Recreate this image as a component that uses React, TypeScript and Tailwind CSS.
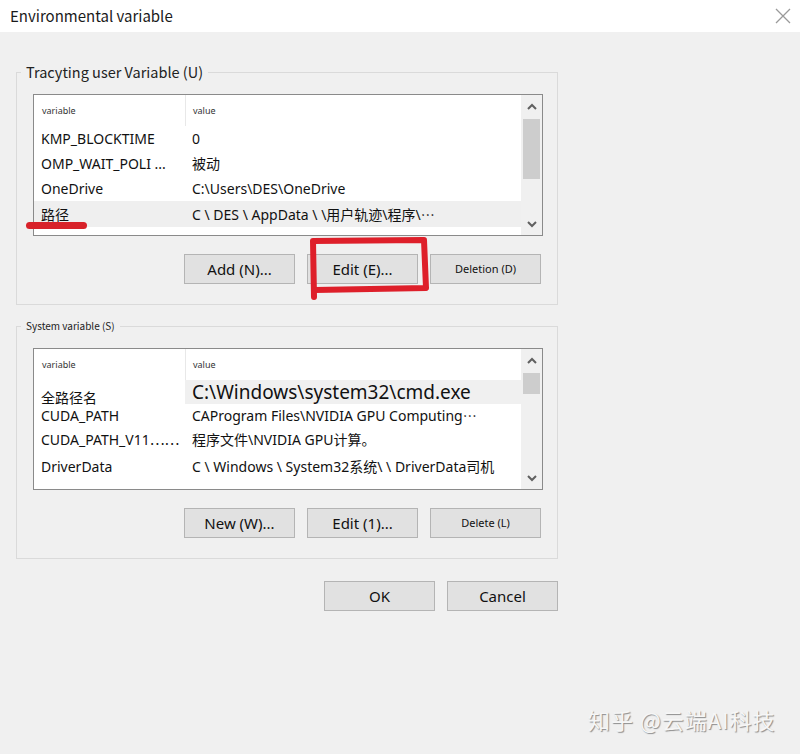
import type { ReactNode } from "react";

const cjk = "font-['Noto_Sans','Noto_Sans_CJK_SC',sans-serif]";
const ui = "font-['Noto_Sans_CJK_SC','Noto_Sans',sans-serif]";
const dots = "font-['Noto_Sans_CJK_SC',sans-serif]";

type Row = { name: ReactNode; value: ReactNode; h: string; sel?: boolean; valueSel?: boolean };

const userRows: Row[] = [
  { name: "KMP_BLOCKTIME", value: "0", h: "h-[25px]" },
  { name: "OMP_WAIT_POLI ...", value: "被动", h: "h-[25px]" },
  { name: "OneDrive", value: "C:\\Users\\DES\\OneDrive", h: "h-[25px]" },
  {
    name: "路径",
    value: (
      <>
        C \ DES \ AppData \ \用户轨迹\程序\<span className={dots}>⋯</span>
      </>
    ),
    h: "h-[26px]",
    sel: true,
  },
];

const sysRows: Row[] = [
  {
    name: <span className="relative top-[5px]">全路径名</span>,
    value: <span className="text-[19px]">C:\Windows\system32\cmd.exe</span>,
    h: "h-[24px]",
    valueSel: true,
  },
  {
    name: "CUDA_PATH",
    value: (
      <>
        CAProgram Files\NVIDIA GPU Computing<span className={dots}>⋯</span>
      </>
    ),
    h: "h-[22px]",
  },
  {
    name: (
      <>
        CUDA_PATH_V11<span className={dots}>⋯⋯</span>
      </>
    ),
    value: "程序文件\\NVIDIA GPU计算。",
    h: "h-[27px]",
  },
  { name: "DriverData", value: "C \\ Windows \\ System32系统\\ \\ DriverData司机", h: "h-[26px]" },
];

function Chevron({ up }: { up?: boolean }) {
  return (
    <svg width="10" height="7" viewBox="0 0 10 7">
      <path
        d={up ? "M1 6 L5 2 L9 6" : "M1 1 L5 5 L9 1"}
        fill="none"
        stroke="#606060"
        strokeWidth="2"
      />
    </svg>
  );
}

function ListBox({ rows, thumb }: { rows: Row[]; thumb: string }) {
  return (
    <div className="flex h-[142px] w-[510px] border border-[#8a8a8a] bg-white">
      <div className="flex flex-1 flex-col">
        <div className="flex h-[31px] items-center text-[9px] text-[#333]">
          <div className="flex h-full w-[151px] items-center pl-[8px]">variable</div>
          <div className="flex h-full items-center border-l border-[#e8e8e8] pl-[7px]">value</div>
        </div>
        {rows.map((r, i) => (
          <div key={i} className={`flex items-center text-[14px] text-[#111] ${r.h} ${r.sel ? "bg-[#efefef]" : ""}`}>
            <div className="w-[151px] shrink-0 whitespace-nowrap pl-[7px]">{r.name}</div>
            <div className={`flex h-full flex-1 items-center whitespace-nowrap pl-[7px] ${r.valueSel ? "bg-[#f0f0f0]" : ""}`}>
              {r.value}
            </div>
          </div>
        ))}
      </div>
      <div className="flex w-[21px] flex-col items-center bg-[#f0f0f0]">
        <div className="flex h-[22px] items-center justify-center">
          <Chevron up />
        </div>
        <div className={`w-[17px] bg-[#cdcdcd] ${thumb}`} />
        <div className="flex-1" />
        <div className="flex h-[22px] items-center justify-center">
          <Chevron />
        </div>
      </div>
    </div>
  );
}

function Btn({ children, small }: { children: ReactNode; small?: boolean }) {
  return (
    <button
      type="button"
      className={`flex h-[30px] w-[111px] items-center justify-center border border-[#b4b4b4] bg-[#e1e1e1] text-[#111] ${
        small ? "text-[11px]" : "text-[15px]"
      }`}
    >
      {children}
    </button>
  );
}

function Group({
  legend,
  legendClass,
  rows,
  thumb,
  buttons,
}: {
  legend: string;
  legendClass: string;
  rows: Row[];
  thumb: string;
  buttons: ReactNode;
}) {
  return (
    <div className="relative flex w-[542px] flex-col items-start border border-[#dadada] pb-[20px] pl-[16px] pt-[21px]">
      <span className={`absolute -top-[11px] left-[4px] bg-[#f0f0f0] px-[5px] leading-[20px] text-[#222] ${legendClass}`}>
        {legend}
      </span>
      <ListBox rows={rows} thumb={thumb} />
      <div className="mt-[18px] flex gap-[12px] pl-[151px]">{buttons}</div>
    </div>
  );
}

export default function App() {
  return (
    <div className={`relative flex h-[754px] w-[800px] flex-col overflow-hidden bg-[#f0f0f0] ${cjk}`}>
      <div className="flex h-[32px] shrink-0 items-center justify-between bg-white pl-[10px] pr-[9px]">
        <span className={`text-[15px] text-[#1a1a1a] ${ui}`}>Environmental variable</span>
        <svg width="16" height="16" viewBox="0 0 16 16">
          <path d="M1 1 L15 15 M15 1 L1 15" stroke="#9a9a9a" strokeWidth="1.3" />
        </svg>
      </div>

      <div className="flex flex-col pl-[16px] pt-[40px]">
        <Group
          legend="Tracyting user Variable (U)"
          legendClass={`text-[14.5px] ${ui}`}
          rows={userRows}
          thumb="h-[60px] mt-[2px]"
          buttons={
            <>
              <Btn>Add (N)...</Btn>
              <Btn>Edit (E)...</Btn>
              <Btn small>Deletion (D)</Btn>
            </>
          }
        />
        <div className="mt-[21px]">
          <Group
            legend="System variable (S)"
            legendClass={`text-[10px] ${ui}`}
            rows={sysRows}
            thumb="h-[21px] mt-[2px]"
            buttons={
              <>
                <Btn>New (W)...</Btn>
                <Btn>Edit (1)...</Btn>
                <Btn small>Delete (L)</Btn>
              </>
            }
          />
        </div>
        <div className="mt-[22px] flex w-[542px] justify-end gap-[12px]">
          <Btn>OK</Btn>
          <Btn>Cancel</Btn>
        </div>
      </div>

      {/* red annotations drawn on the screenshot */}
      <div className="absolute left-[26px] top-[222px] h-[7px] w-[61px] rounded-full bg-[#d8222a]" />
      <svg className="absolute left-0 top-0" width="800" height="754" viewBox="0 0 800 754">
        <path
          d="M314 297 L313 241 L424 240 L426 288 L315 290"
          fill="none"
          stroke="#de1f2a"
          strokeWidth="6"
          strokeLinecap="round"
          strokeLinejoin="round"
        />
      </svg>

      <div className="absolute left-[588px] top-[703px] font-['Noto_Sans_CJK_SC',sans-serif] text-[22px] tracking-[1px] text-[#f6f6f6] [text-shadow:1px_1px_1px_#8c8c8c]">
        知乎 @云端AI科技
      </div>
    </div>
  );
}
